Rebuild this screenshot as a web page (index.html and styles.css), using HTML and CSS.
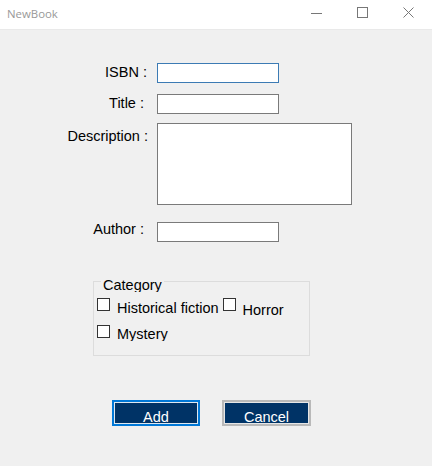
FILE: index.html
```html
<!DOCTYPE html>
<html>
<head>
<meta charset="utf-8">
<link rel="stylesheet" href="styles.css">
</head>
<body>
<div class="titlebar">
  <span class="title">NewBook</span>
  <div class="controls">
    <span class="ctl"><svg width="12" height="12" viewBox="0 0 12 12"><path d="M0 6.5H11" stroke="#777" stroke-width="1"/></svg></span>
    <span class="ctl"><svg width="12" height="12" viewBox="0 0 12 12"><rect x="0.5" y="0.5" width="10" height="10" fill="none" stroke="#777" stroke-width="1"/></svg></span>
    <span class="ctl"><svg width="12" height="12" viewBox="0 0 12 12"><path d="M0.5 0.5L10.5 10.5M10.5 0.5L0.5 10.5" stroke="#777" stroke-width="1"/></svg></span>
  </div>
</div>
<div class="client">
  <div class="row r-isbn">
    <label class="lbl lbl-isbn">ISBN :</label>
    <div class="box focused"></div>
  </div>
  <div class="row r-title">
    <label class="lbl lbl-short">Title :</label>
    <div class="box"></div>
  </div>
  <div class="row r-desc">
    <label class="lbl lbl-desc">Description :</label>
    <div class="box area"></div>
  </div>
  <div class="row r-author">
    <label class="lbl lbl-short lbl-author">Author :</label>
    <div class="box"></div>
  </div>
  <fieldset class="group">
    <legend>Category</legend>
    <div class="checks">
      <div class="check"><span class="cb"></span><span class="ct">Historical fiction</span></div>
      <div class="check"><span class="cb"></span><span class="ct ct-low">Horror</span></div>
    </div>
    <div class="checks second">
      <div class="check"><span class="cb"></span><span class="ct ct-up">Mystery</span></div>
    </div>
  </fieldset>
  <div class="buttons">
    <button class="btn btn-add">Add</button>
    <button class="btn btn-cancel">Cancel</button>
  </div>
</div>
</body>
</html>
```
FILE: styles.css
```css
html, body {
  margin: 0;
  padding: 0;
}
body {
  width: 432px;
  height: 466px;
  background: #f0f0f0;
  font-family: "Liberation Sans", Arial, sans-serif;
  font-size: 14.5px;
  color: #000;
  overflow: hidden;
}
.titlebar {
  height: 29px;
  background: #fff;
  border-bottom: 1px solid #e9e9e9;
  display: flex;
  align-items: center;
  justify-content: space-between;
}
.title {
  font-family: "Open Sans", "Liberation Sans", sans-serif;
  font-size: 11.4px;
  color: #999;
  padding-left: 7px;
  margin-top: -2px;
}
.controls {
  display: flex;
  height: 29px;
}
.ctl {
  width: 46px;
  display: flex;
  align-items: center;
  justify-content: center;
  padding-bottom: 3px;
}
.client {
  padding-top: 33px;
}
.row {
  display: flex;
  align-items: flex-start;
}
.lbl {
  text-align: right;
  padding-top: 1px;
  line-height: 16px;
  flex: none;
}
.lbl-isbn { width: 147px; margin-right: 10px; }
.lbl-short { width: 144px; margin-right: 13px; }
.lbl-desc { width: 148px; margin-right: 9px; padding-top: 5px; }
.lbl-author { padding-top: 0; margin-top: -1px; }
.box {
  width: 120px;
  height: 18px;
  background: #fff;
  border: 1px solid #7a7a7a;
}
.box.focused { border-color: #3c7bb4; }
.box.area { width: 193px; height: 80px; }
.r-title { margin-top: 11px; }
.r-desc { margin-top: 9px; }
.r-author { margin-top: 17px; }
.group {
  margin: 29px 0 0 93px;
  width: 217px;
  height: 85px;
  box-sizing: border-box;
  border: 1px solid #dcdcdc;
  padding: 0 0 0 3px;
  min-width: 0;
}
.group legend {
  padding: 6px 2px 0;
  margin-left: 4px;
  height: 15px;
  line-height: 16px;
  overflow: hidden;
  box-sizing: content-box;
}
.checks {
  display: flex;
  margin-top: 6px;
  height: 24px;
  overflow: hidden;
}
.checks.second { margin-top: 3px; height: 16px; }
.check {
  display: flex;
  align-items: flex-start;
  margin-right: 4px;
}
.cb {
  width: 11px;
  height: 11px;
  border: 1px solid #333;
  background: #fff;
  flex: none;
}
.ct {
  margin-left: 7px;
  padding-top: 2px;
  line-height: 16px;
}
.ct-low { padding-top: 4px; }
.ct-up { padding-top: 1px; }
.buttons {
  display: flex;
  margin: 44px 0 0 112px;
  gap: 22px;
}
.btn {
  height: 26px;
  width: 88px;
  background: #003366;
  color: #fff;
  font-family: "Liberation Sans", Arial, sans-serif;
  font-size: 14.5px;
  padding: 7px 0 0 0;
  line-height: 16px;
  box-sizing: border-box;
}
.btn-add {
  border: 2px solid #0078d7;
  box-shadow: inset 0 0 0 1px #dfe8f0;
}
.btn-cancel {
  width: 89px;
  border: 2px solid #b9b9b9;
  box-shadow: inset 0 0 0 1px #e6e6e6;
}
```
